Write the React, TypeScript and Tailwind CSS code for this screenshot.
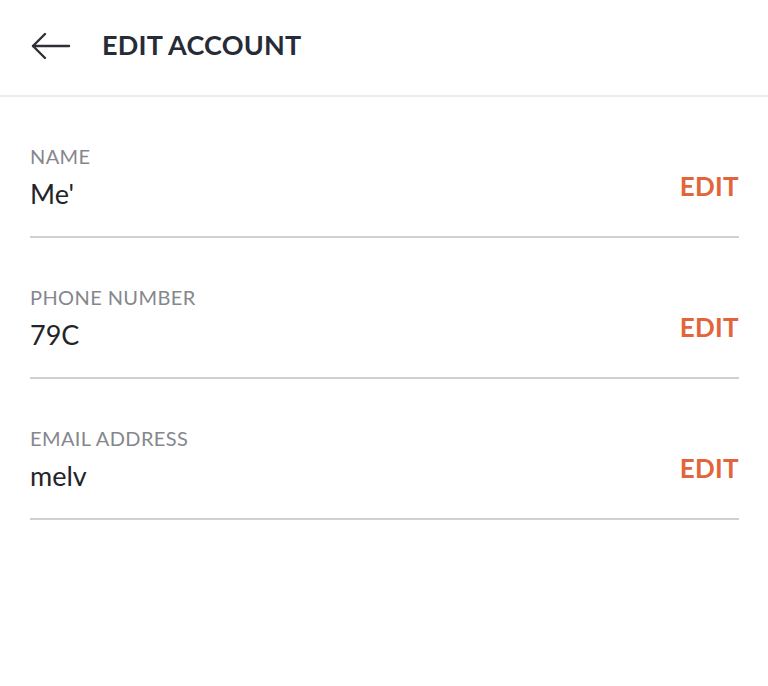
import React from "react";

const fields = [
  { label: "NAME", value: "Me'" },
  { label: "PHONE NUMBER", value: "79C" },
  { label: "EMAIL ADDRESS", value: "melv" },
];

export default function App() {
  return (
    <div className="w-[768px] h-[686px] bg-white" style={{ fontFamily: "Lato, 'Open Sans', sans-serif" }}>
      <div className="h-[97px] border-b-2 border-[#ececec] flex items-center pl-[31px]">
        <svg width="40" height="28" viewBox="0 0 40 28" fill="none" stroke="#2f3035" strokeWidth="2.4" strokeLinecap="round" strokeLinejoin="round" className="-mt-[3px]">
          <path d="M2 14 H38" />
          <path d="M14 2 L2 14 L14 26" />
        </svg>
        <div className="ml-[31px] -mt-[5px] text-[27px] font-bold text-[#272b37] tracking-[0.2px]">EDIT ACCOUNT</div>
      </div>
      <div className="mx-[30px] mr-[29px]">
        {fields.map((f) => (
          <div key={f.label} className="h-[141px] border-b-2 border-[#d0d0d2] pt-[47px] flex justify-between">
            <div className="flex flex-col">
              <div className="text-[20px] leading-[24px] text-[#85878d] tracking-[0.4px]">{f.label}</div>
              <div className="text-[27px] leading-[32px] text-[#222428] mt-[10px]">{f.value}</div>
            </div>
            <div className="text-[26px] font-bold text-[#e2643a] mt-[27px] leading-[30px] tracking-[0.3px]">EDIT</div>
          </div>
        ))}
      </div>
    </div>
  );
}
